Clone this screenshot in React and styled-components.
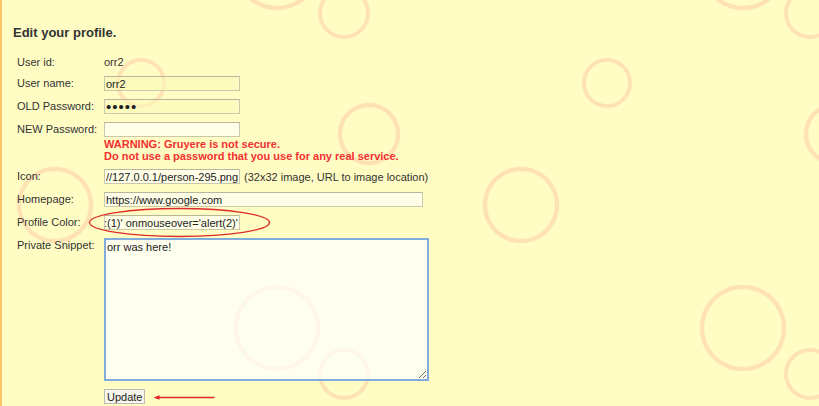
import React from 'react'
import styled, { createGlobalStyle } from 'styled-components'

const GlobalStyle = createGlobalStyle`
  html, body {
    margin: 0;
    padding: 0;
  }
  body {
    font-family: "Liberation Sans", Arial, sans-serif;
  }
`

// cheese holes: x, y, radius, stroke (one 466x361 tile)
const holes = [
  [277, -33, 41, 4],
  [277, 328, 41, 4],
  [344, 13, 24, 3.5],
  [344, 374, 24, 3.5],
  [141, 83, 23, 3.5],
  [369, 134, 29, 4],
  [55, 205, 36, 4],
]
const holeColor = '#ffe2b3'
const cheese = holes
  .map(([x, y, r, w]) => {
    const inner = r - w / 2
    const outer = r + w / 2
    return `radial-gradient(circle ${outer + 3}px at ${x}px ${y}px, transparent ${inner - 0.7}px, ${holeColor} ${inner + 0.3}px, ${holeColor} ${outer - 0.3}px, transparent ${outer + 0.7}px)`
  })
  .join(', ')

const Page = styled.div`
  position: relative;
  box-sizing: border-box;
  min-height: 100vh;
  padding: 25px 0 0 11px;
  border-left: 2px solid #ffc46a;
  background-color: #fffdc4;
  background-image: ${cheese};
  background-size: 466px 361px;
  background-origin: border-box;
  color: #333;
  font-size: 11px;
`

const Heading = styled.h3`
  margin: 0 0 13px;
  font-size: 13px;
  line-height: 15px;
  font-weight: bold;
  color: #333;
`

const Form = styled.div`
  display: flex;
  flex-direction: column;
`

const Row = styled.div`
  display: grid;
  grid-template-columns: 87px 1fr;
  align-items: start;
  box-sizing: border-box;
  min-height: 20px;
  padding: 3px 0 3px 4px;
`

const Label = styled.div`
  line-height: 13px;
  padding-top: ${p => (p.$text ? 0 : 1)}px;
  white-space: nowrap;
`

const Value = styled.div`
  line-height: 13px;
`

const Field = styled.input`
  display: block;
  box-sizing: border-box;
  width: ${p => p.$width}px;
  height: 15px;
  margin: 0 0 2px;
  padding: 0 1px 0 ${p => (p.$indent ? 0 : 1)}px;
  border: 1px solid #cbc8ad;
  border-top-color: #b9b69e;
  background: ${p => (p.$filled ? 'rgba(252, 248, 186, 0.6)' : 'rgba(255, 255, 242, 0.78)')};
  font-family: "Liberation Sans", Arial, sans-serif;
  font-size: ${p => (p.type === 'password' ? 15 : 11)}px;
  letter-spacing: ${p => (p.type === 'password' ? 1 : 0)}px;
  text-indent: ${p => p.$indent || 0}px;
  color: #222;
  outline: none;
`

const Inline = styled.div`
  display: flex;
  align-items: center;
  gap: 4px;
  margin-bottom: 2px;

  ${Field} {
    margin: 0;
  }
`

const Warning = styled.div`
  margin: -1px 0 1px;
  color: #f43030;
  font-weight: bold;
  line-height: 12px;
  white-space: nowrap;
`

const Snippet = styled.textarea`
  display: block;
  box-sizing: border-box;
  width: 325px;
  height: 143px;
  margin: 0;
  padding: 1px 1px;
  border: 2px solid #80ace0;
  background: rgba(255, 255, 255, 0.72);
  font-family: "Liberation Sans", Arial, sans-serif;
  font-size: 11px;
  line-height: 13px;
  color: #222;
  outline: none;
`

const Button = styled.button`
  box-sizing: border-box;
  height: 15px;
  margin-top: 2px;
  padding: 0 2px;
  border: 1px solid #bdbcb0;
  border-radius: 0;
  background: #f7f7ef;
  font-family: "Liberation Sans", Arial, sans-serif;
  font-size: 11px;
  line-height: 12px;
  color: #222;
`

const Mark = styled.svg`
  position: absolute;
  left: ${p => p.$x}px;
  top: ${p => p.$y}px;
  overflow: visible;
  pointer-events: none;
`

const App = () => (
  <>
    <GlobalStyle />
    <Page>
      <Heading>Edit your profile.</Heading>
      <Form>
        <Row>
          <Label $text>User id:</Label>
          <Value>orr2</Value>
        </Row>
        <Row>
          <Label>User name:</Label>
          <Field $width={136} $filled defaultValue="orr2" />
        </Row>
        <Row>
          <Label>OLD Password:</Label>
          <Field $width={136} $filled type="password" defaultValue="orr22" />
        </Row>
        <Row>
          <Label>NEW Password:</Label>
          <div>
            <Field $width={136} type="password" />
            <Warning>
              WARNING: Gruyere is not secure.
              <br />
              Do not use a password that you use for any real service.
            </Warning>
          </div>
        </Row>
        <Row>
          <Label>Icon:</Label>
          <Inline>
            <Field $width={136} defaultValue="//127.0.0.1/person-295.png" />
            <span>(32x32 image, URL to image location)</span>
          </Inline>
        </Row>
        <Row>
          <Label>Homepage:</Label>
          <Field $width={319} defaultValue="https://www.google.com" />
        </Row>
        <Row>
          <Label>Profile Color:</Label>
          <Field $width={136} $indent={-1} defaultValue=":(1)' onmouseover='alert(2)'" />
        </Row>
        <Row>
          <Label>Private Snippet:</Label>
          <Snippet defaultValue="orr was here!" />
        </Row>
        <Row>
          <span />
          <div>
            <Button>Update</Button>
          </div>
        </Row>
      </Form>

      <Mark $x={86} $y={207} width="183" height="31" viewBox="0 0 183 31">
        <ellipse cx="91.5" cy="15.5" rx="90" ry="14" fill="none" stroke="#dd2a2a" strokeWidth="1.3" />
      </Mark>
      <Mark $x={150} $y={393} width="64" height="9" viewBox="0 0 64 9">
        <line x1="5" y1="4.5" x2="62" y2="4.5" stroke="#e02828" strokeWidth="1.4" strokeLinecap="round" />
        <path d="M1.5 4.5 L7.5 2.3 L7.5 6.7 Z" fill="#e02828" />
      </Mark>
    </Page>
  </>
)

export default App
